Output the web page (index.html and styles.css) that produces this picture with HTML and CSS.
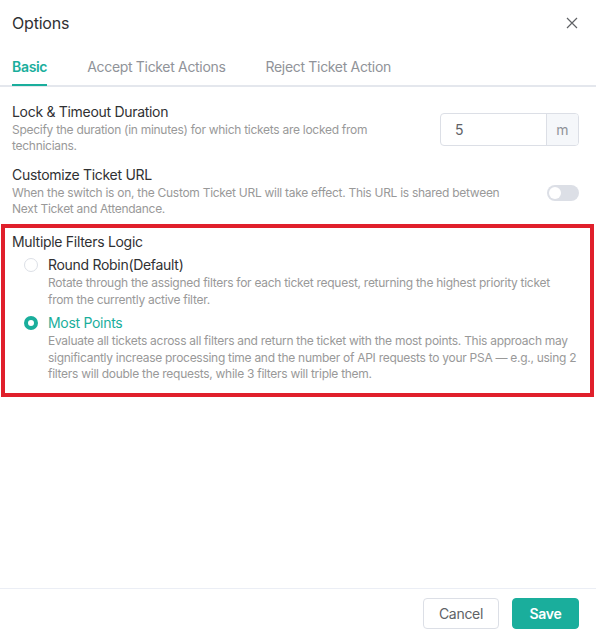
FILE: index.html
```html
<!DOCTYPE html>
<html>
<head>
<meta charset="utf-8">
<link rel="stylesheet" href="styles.css">
</head>
<body>
<div class="dialog">
  <div class="header">
    <span class="title">Options</span>
    <svg class="close" width="12" height="12" viewBox="0 0 12 12"><path d="M1 1L11 11M11 1L1 11" stroke="#606266" stroke-width="1.2" fill="none"/></svg>
  </div>
  <div class="tabs">
    <div class="tab active">Basic</div>
    <div class="tab">Accept Ticket Actions</div>
    <div class="tab">Reject Ticket Action</div>
  </div>
  <div class="body">
    <div class="setting">
      <div class="info">
        <div class="label">Lock &amp; Timeout Duration</div>
        <div class="desc">Specify the duration (in minutes) for which tickets are locked from technicians.</div>
      </div>
      <div class="input-group">
        <div class="input">5</div>
        <div class="addon">m</div>
      </div>
    </div>
    <div class="setting">
      <div class="info">
        <div class="label">Customize Ticket URL</div>
        <div class="desc">When the switch is on, the Custom Ticket URL will take effect. This URL is shared between Next Ticket and Attendance.</div>
      </div>
      <div class="switch"><span class="knob"></span></div>
    </div>
    <div class="highlight">
      <div class="label">Multiple Filters Logic</div>
      <div class="option">
        <span class="radio"></span>
        <div class="opt-text">
          <div class="opt-label">Round Robin(Default)</div>
          <div class="desc">Rotate through the assigned filters for each ticket request, returning the highest priority ticket from the currently active filter.</div>
        </div>
      </div>
      <div class="option">
        <span class="radio checked"></span>
        <div class="opt-text">
          <div class="opt-label checked">Most Points</div>
          <div class="desc">Evaluate all tickets across all filters and return the ticket with the most points. This approach may significantly increase processing time and the number of API requests to your PSA — e.g., using 2 filters will double the requests, while 3 filters will triple them.</div>
        </div>
      </div>
    </div>
  </div>
  <div class="footer">
    <button class="btn cancel">Cancel</button>
    <button class="btn save">Save</button>
  </div>
</div>
</body>
</html>
```
FILE: styles.css
```css
* { box-sizing: border-box; }
html, body { margin: 0; padding: 0; }
body {
  font-family: Inter, "Noto Sans", sans-serif;
  color: #303133;
  background: #fff;
}
.dialog {
  height: 100vh;
  display: flex;
  flex-direction: column;
}
.header {
  display: flex;
  justify-content: space-between;
  align-items: center;
  padding: 12px 18px 12px 12px;
  height: 46px;
}
.title {
  font-size: 16px;
  line-height: 20px;
  color: #303133;
  letter-spacing: -0.2px;
}
.close { display: block; }
.tabs {
  display: flex;
  height: 41px;
  border-bottom: 2px solid #e4e7ed;
  padding-left: 12px;
}
.tab {
  position: relative;
  font-size: 14px;
  line-height: 36px;
  padding: 3px 20px 0;
  color: #909399;
  letter-spacing: -0.32px;
}
.tab:first-child { padding-left: 0; }
.tab.active {
  color: #1aae9c;
  font-weight: 600;
}
.tab.active::after {
  content: "";
  position: absolute;
  left: 0;
  right: 20px;
  bottom: -1px;
  height: 2px;
  background: #1aae9c;
}
.body {
  flex: 1;
  padding: 15px 17px 0 12px;
}
.setting {
  display: flex;
  align-items: center;
  gap: 36px;
  margin-bottom: 11px;
}
.setting + .setting { margin-bottom: 7px; }
.info { flex: 1; }
.label {
  font-size: 14px;
  line-height: 20px;
  color: #303133;
  letter-spacing: -0.3px;
}
.desc {
  font-size: 12px;
  line-height: 16px;
  color: #999;
  letter-spacing: -0.28px;
}
.input-group {
  display: flex;
  width: 139px;
  height: 33px;
  border: 1px solid #dcdfe6;
  border-radius: 4px;
  overflow: hidden;
  margin-top: 2px;
}
.input {
  flex: 1;
  font-size: 14px;
  line-height: 31px;
  padding-left: 14px;
  color: #606266;
}
.addon {
  width: 32px;
  border-left: 1px solid #dcdfe6;
  background: #f5f7fa;
  font-size: 14px;
  line-height: 31px;
  text-align: center;
  color: #909399;
}
.switch {
  width: 32px;
  height: 16px;
  border-radius: 8px;
  background: #dcdfe6;
  position: relative;
  margin-top: 4px;
}
.knob {
  position: absolute;
  left: 2px;
  top: 2px;
  width: 12px;
  height: 12px;
  border-radius: 50%;
  background: #fff;
}
.highlight {
  margin: 0 -15px 0 -11px;
  border: 4px solid #e0202b;
  padding: 4px 13px 10px 7px;
}
.option {
  display: flex;
  gap: 10px;
  padding-left: 12px;
  margin-top: 3px;
}
.option + .option { margin-top: 5px; }
.radio {
  flex: none;
  width: 14px;
  height: 14px;
  border-radius: 50%;
  border: 1px solid #dcdfe6;
  margin-top: 3px;
  background: #fff;
}
.radio.checked {
  border: 4px solid #1aae9c;
  background: #fff;
}
.opt-label {
  font-size: 14px;
  line-height: 20px;
  color: #303133;
  letter-spacing: -0.3px;
}
.opt-label.checked { color: #1aae9c; }
.option .desc { line-height: 16.5px; }
.footer {
  border-top: 1px solid #ebeef5;
  display: flex;
  justify-content: flex-end;
  gap: 13px;
  padding: 9px 17px 9px 12px;
  height: 49px;
}
.btn {
  height: 31px;
  border-radius: 4px;
  font-family: inherit;
  font-size: 14px;
  letter-spacing: -0.3px;
  cursor: pointer;
}
.cancel {
  width: 76px;
  background: #fff;
  border: 1px solid #dcdfe6;
  color: #606266;
}
.save {
  width: 67px;
  background: #1aae9c;
  border: 1px solid #1aae9c;
  color: #fff;
  font-weight: 600;
}
```
